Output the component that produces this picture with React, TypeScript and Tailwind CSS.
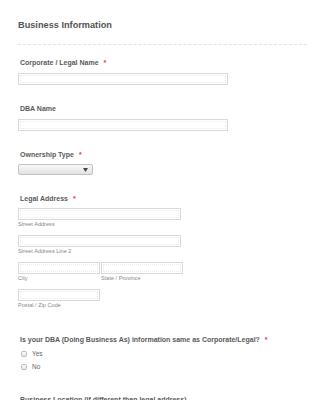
import React from "react";

const F = { fontFamily: '"Liberation Sans", Arial, sans-serif' };

function Star() {
  return <span className="ml-[5px] text-[#e8363a]">*</span>;
}

function Label({ children, req, top }: { children: React.ReactNode; req?: boolean; top: string }) {
  return (
    <div className={`${top} pl-[2px] text-[7px] leading-[9px] font-bold text-[#5a5a5a]`}>
      {children}
      {req && <Star />}
    </div>
  );
}

function Input({ w }: { w: string }) {
  return (
    <div className={`${w} h-[12px] border border-[#d9d9d9] bg-white p-[1px]`}>
      <div className="h-full w-full border border-dotted border-[#ececec]" />
    </div>
  );
}

function Sub({ children }: { children: React.ReactNode }) {
  return <div className="h-[8px] text-[5.6px] leading-[8px] text-[#888]">{children}</div>;
}

function Radio({ label, top }: { label: string; top: string }) {
  return (
    <div className={`${top} flex h-[13px] items-center pl-[3px]`}>
      <div className="h-[6px] w-[6px] rounded-[1.5px] border border-[#bdbdbd] bg-gradient-to-b from-[#fafafa] to-[#e4e4e4]" />
      <span className="ml-[5px] text-[6.5px] leading-[13px] text-[#666]">{label}</span>
    </div>
  );
}

export default function App() {
  return (
    <div className="h-[400px] w-[325px] overflow-hidden bg-white pl-[18px] pr-[18px]" style={F}>
      <div className="pt-[20px] text-[9.2px] leading-[11px] font-bold text-[#555]">Business Information</div>
      <div className="mt-[13px] w-[289px] border-t border-dashed border-[#e2e2e2]" />

      <Label req top="mt-[13px]">Corporate / Legal Name</Label>
      <div className="mt-[6px]">
        <Input w="w-[210px]" />
      </div>

      <Label top="mt-[19px]">DBA Name</Label>
      <div className="mt-[6px]">
        <Input w="w-[210px]" />
      </div>

      <Label req top="mt-[19px]">Ownership Type</Label>
      <div className="mt-[5px] flex h-[11px] w-[75px] items-center justify-end rounded-[2px] border border-[#c2c2c2] bg-gradient-to-b from-[#f9f9f9] to-[#e2e2e2] pr-[4px]">
        <svg width="5" height="4" viewBox="0 0 5 4">
          <path d="M0 0 H5 L2.5 4 Z" fill="#444" />
        </svg>
      </div>

      <Label req top="mt-[19px]">Legal Address</Label>
      <div className="mt-[5px]">
        <Input w="w-[163px]" />
        <Sub>Street Address</Sub>
      </div>
      <div className="mt-[7px]">
        <Input w="w-[163px]" />
        <Sub>Street Address Line 2</Sub>
      </div>
      <div className="mt-[7px] flex gap-[1px]">
        <div>
          <Input w="w-[82px]" />
          <Sub>City</Sub>
        </div>
        <div>
          <Input w="w-[82px]" />
          <Sub>State / Province</Sub>
        </div>
      </div>
      <div className="mt-[7px]">
        <Input w="w-[82px]" />
        <Sub>Postal / Zip Code</Sub>
      </div>

      <Label req top="mt-[26px]">Is your DBA (Doing Business As) information same as Corporate/Legal?</Label>
      <Radio label="Yes" top="mt-[3px]" />
      <Radio label="No" top="mt-0" />

      <Label top="mt-[22px]">Business Location (if different than legal address)</Label>
    </div>
  );
}
